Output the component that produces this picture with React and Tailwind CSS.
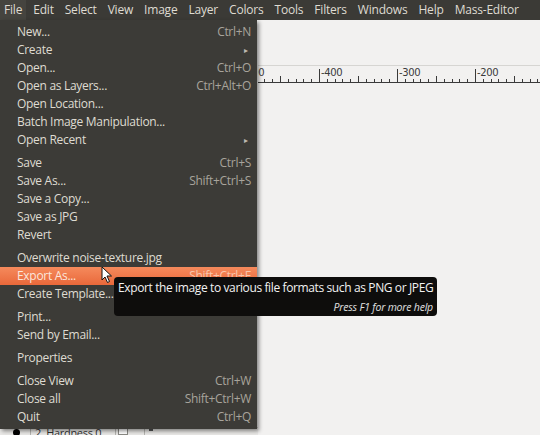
import React from "react";

const menubar = ["File", "Edit", "Select", "View", "Image", "Layer", "Colors", "Tools", "Filters", "Windows", "Help", "Mass-Editor"];

const groups = [
  [
    ["New...", "Ctrl+N"],
    ["Create", ">"],
    ["Open...", "Ctrl+O"],
    ["Open as Layers...", "Ctrl+Alt+O"],
    ["Open Location...", ""],
    ["Batch Image Manipulation...", ""],
    ["Open Recent", ">"],
  ],
  [
    ["Save", "Ctrl+S"],
    ["Save As...", "Shift+Ctrl+S"],
    ["Save a Copy...", ""],
    ["Save as JPG", ""],
    ["Revert", ""],
  ],
  [
    ["Overwrite noise-texture.jpg", ""],
    ["Export As...", "Shift+Ctrl+E", true],
    ["Create Template...", ""],
  ],
  [
    ["Print...", ""],
    ["Send by Email...", ""],
  ],
  [["Properties", ""]],
  [
    ["Close View", "Ctrl+W"],
    ["Close all", "Shift+Ctrl+W"],
    ["Quit", "Ctrl+Q"],
  ],
];

function Ruler() {
  const ticks = [];
  for (let m = -1; m < 4; m++) {
    const base = 61 + m * 78;
    for (let i = 0; i < 10; i++) {
      const x = Math.round(base + i * 7.8);
      const h = i === 0 ? 13 : i === 5 ? 6 : 3;
      ticks.push(<line key={m + "-" + i} x1={x + 0.5} x2={x + 0.5} y1={16 - h} y2={16} stroke="#3a3a3a" strokeWidth="1" />);
    }
  }
  const labels = [["-500", -17], ["-400", 61], ["-300", 139], ["-200", 217]];
  return (
    <svg width="282" height="17" className="block overflow-hidden">
      {ticks}
      {labels.map(([t, x]) => (
        <text key={t} x={x + 2} y="10" fontSize="10" fill="#3a3a3a" fontFamily="'DejaVu Sans', sans-serif" letterSpacing="-0.4">{t}</text>
      ))}
      <line x1="0" x2="282" y1="16.5" y2="16.5" stroke="#3a3a3a" strokeWidth="1" />
    </svg>
  );
}

function Cursor() {
  return (
    <svg width="12" height="18" viewBox="0 0 12 18" className="absolute left-[101px] top-[266px]">
      <path d="M1 1 L1 14 L4 11 L6.5 16.5 L8.5 15.5 L6 10 L10.5 10 Z" fill="#ffffff" stroke="#111" strokeWidth="1" strokeLinejoin="round" />
    </svg>
  );
}

export default function App() {
  return (
    <div className="relative w-[540px] h-[435px] overflow-hidden bg-[#f2f1f0] text-[12px] tracking-[-0.3px]" style={{ fontFamily: "'Open Sans', 'Noto Sans', sans-serif" }}>
      {/* menubar */}
      <div className="h-[20px] bg-[#3b3a36] flex items-center text-[#dfdbd2] text-[12px] whitespace-nowrap tracking-[-0.2px]">
        {menubar.map((m, i) => (
          <div key={m} className={"px-[4px] h-[20px] flex items-center mr-[3px] " + (i === 0 ? "bg-[#45443f]" : "")}>{m}</div>
        ))}
      </div>
      {/* body behind */}
      <div className="flex h-[415px]">
        <div className="w-[258px] flex flex-col justify-end">
          <div className="h-[8px] bg-[#e9e8e6] border-t border-[#c9c8c5] flex items-start overflow-hidden text-[11px] text-[#333]">
            <div className="ml-[13px] mt-[1px] w-[7px] h-[7px] rounded-full bg-black" />
            <div className="ml-[10px] h-full border-l border-[#b5b4b0]" />
            <div className="ml-[4px] -mt-[1px] leading-[12px]">2. Hardness 0</div>
            <div className="ml-[14px] h-full border-l border-[#b5b4b0]" />
            <div className="ml-[2px] w-[10px] h-full border border-[#8a8984] bg-white" />
            <div className="ml-[16px] h-full border-l border-[#b5b4b0]" />
            <div className="ml-[4px] w-[4px] h-[2px] mt-[1px] bg-[#555]" />
          </div>
        </div>
        <div className="flex-1 flex flex-col">
          <div className="h-[45px]" />
          <div className="border-t border-[#d6d5d2]">
            <Ruler />
          </div>
          <div className="flex-1" />
        </div>
      </div>

      {/* dropdown menu */}
      <div className="absolute left-0 top-[20px] w-[257px] bg-[#3c3b37] py-[3px] shadow-[2px_2px_4px_rgba(0,0,0,0.45)] whitespace-nowrap">
        {groups.map((g, gi) => (
          <div key={gi} className={gi > 0 ? "mt-[5px]" : ""}>
            {g.map(([label, sc, hl]) => (
              <div key={label} className={"h-[18px] flex items-center justify-between pl-[17px] pr-[6px] " + (hl ? "bg-gradient-to-b from-[#f58a5c] to-[#e9683a] text-[#fbe6dc]" : "text-[#dfdbd2]")}>
                <span>{label}</span>
                {sc === ">" ? (
                  <span className="text-[8px] text-[#bdb9b0] mr-[3px]">▸</span>
                ) : (
                  <span className={hl ? "text-[#f9c6ad]" : "text-[#a8a49c]"}>{sc}</span>
                )}
              </div>
            ))}
          </div>
        ))}
      </div>

      <Cursor />

      {/* tooltip */}
      <div className="absolute left-[114px] top-[277px] w-[323px] h-[39px] bg-[#0e0d0c] rounded-[4px] px-[4px] pt-[3px] text-[#f2f2f2] whitespace-nowrap">
        <div className="text-[12px] tracking-[-0.38px] leading-[16px]">Export the image to various file formats such as PNG or JPEG</div>
        <div className="text-[10.5px] italic text-right leading-[14px] mt-[4px] text-[#e0e0e0] tracking-[-0.2px]">Press F1 for more help</div>
      </div>
    </div>
  );
}
